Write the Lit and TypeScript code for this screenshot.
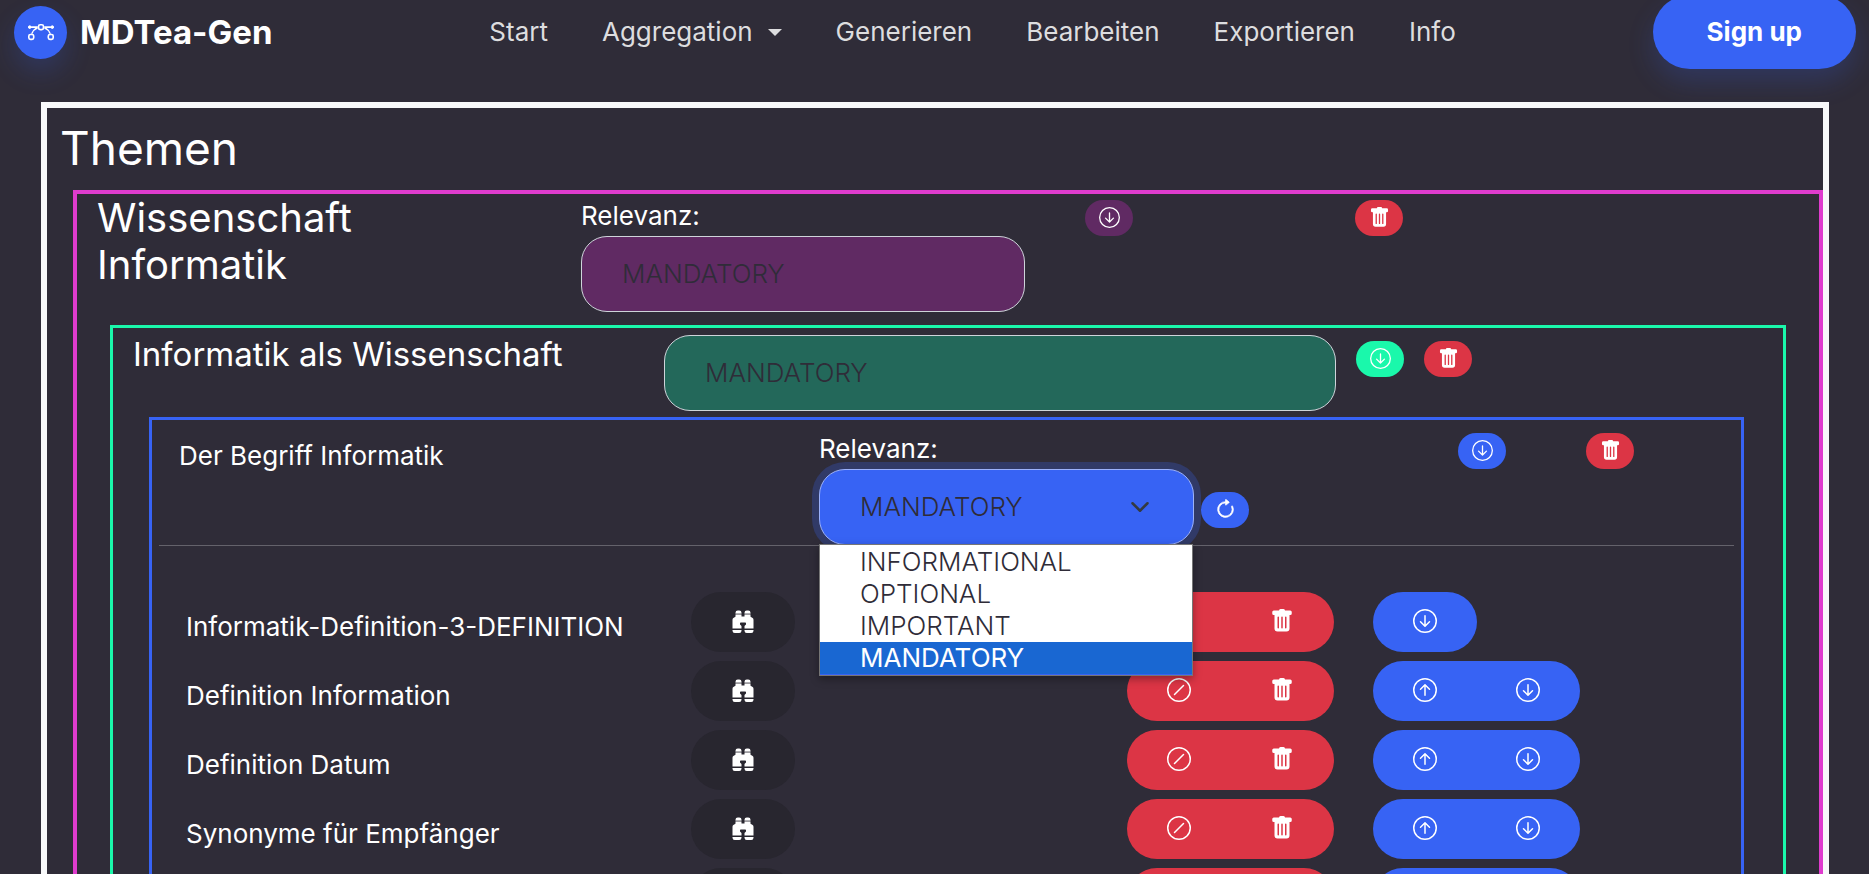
import { LitElement, html, css, svg } from "lit";
import { customElement } from "lit/decorators.js";
import { classMap } from "lit/directives/class-map.js";

const ICONS = {
  bezier: svg`<path fill-rule="evenodd" d="M0 10.5A1.500 1.500 0 0 1 1.500 9h1A1.500 1.500 0 0 1 4 10.500v1A1.500 1.500 0 0 1 2.500 13h-1A1.500 1.500 0 0 1 0 11.500v-1zm1.500-.5a.5.5 0 0 0-.5.5v1a.5.5 0 0 0 .5.5h1a.5.5 0 0 0 .5-.5v-1a.5.5 0 0 0-.5-.5h-1zm10.500.5A1.500 1.500 0 0 1 13.500 9h1a1.500 1.500 0 0 1 1.500 1.500v1a1.500 1.500 0 0 1-1.500 1.500h-1a1.500 1.500 0 0 1-1.500-1.500v-1zm1.500-.5a.5.5 0 0 0-.5.5v1a.5.5 0 0 0 .5.5h1a.5.5 0 0 0 .5-.5v-1a.5.5 0 0 0-.5-.5h-1zM6 4.500A1.500 1.500 0 0 1 7.500 3h1A1.500 1.500 0 0 1 10 4.500v1A1.500 1.500 0 0 1 8.500 7h-1A1.500 1.500 0 0 1 6 5.500v-1zM7.500 4a.5.5 0 0 0-.5.5v1a.5.5 0 0 0 .5.5h1a.5.5 0 0 0 .5-.5v-1a.5.5 0 0 0-.5-.5h-1z"/><path d="M6 4.500H1.866a1 1 0 1 0 0 1h2.668A6.517 6.517 0 0 0 1.814 9H2.500c.123 0 .244.015.358.043a5.517 5.517 0 0 1 3.185-3.185A1.503 1.503 0 0 1 6 5.500v-1zm3.957 1.358A1.500 1.500 0 0 0 10 5.500v-1h4.134a1 1 0 1 1 0 1h-2.668a6.517 6.517 0 0 1 2.720 3.500H13.500c-.123 0-.243.015-.358.043a5.517 5.517 0 0 0-3.185-3.185z"/>`,
  down: svg`<path fill-rule="evenodd" d="M1 8a7 7 0 1 0 14 0A7 7 0 0 0 1 8zm15 0A8 8 0 1 1 0 8a8 8 0 0 1 16 0zM8.500 4.500a.5.5 0 0 0-1 0v5.793L5.354 8.146a.5.5 0 1 0-.708.708l3 3a.5.5 0 0 0 .708 0l3-3a.5.5 0 0 0-.708-.708L8.500 10.293V4.500z"/>`,
  up: svg`<path fill-rule="evenodd" d="M1 8a7 7 0 1 0 14 0A7 7 0 0 0 1 8zm15 0A8 8 0 1 1 0 8a8 8 0 0 1 16 0zm-7.500 3.500a.5.5 0 0 1-1 0V5.707L5.354 7.854a.5.5 0 1 1-.708-.708l3-3a.5.5 0 0 1 .708 0l3 3a.5.5 0 0 1-.708.708L8.500 5.707V11.500z"/>`,
  slash: svg`<path d="M8 15A7 7 0 1 1 8 1a7 7 0 0 1 0 14zm0 1A8 8 0 1 0 8 0a8 8 0 0 0 0 16z"/><path d="M11.354 4.646a.5.5 0 0 0-.708 0l-6 6a.5.5 0 0 0 .708.708l6-6a.5.5 0 0 0 0-.708z"/>`,
  trash: svg`<path d="M2.500 1a1 1 0 0 0-1 1v1a1 1 0 0 0 1 1H3v9a2 2 0 0 0 2 2h6a2 2 0 0 0 2-2V4h.5a1 1 0 0 0 1-1V2a1 1 0 0 0-1-1H10a1 1 0 0 0-1-1H7a1 1 0 0 0-1 1H2.500zm3 4a.5.5 0 0 1 .5.5v7a.5.5 0 0 1-1 0v-7a.5.5 0 0 1 .5-.5zM8 5a.5.5 0 0 1 .5.5v7a.5.5 0 0 1-1 0v-7A.5.5 0 0 1 8 5zm3 .5v7a.5.5 0 0 1-1 0v-7a.5.5 0 0 1 1 0z"/>`,
  binoculars: svg`<path fill-opacity="0.55" d="M3 3h4v1H3zM9 3h4v1H9z"/><path d="M4.500 1A1.500 1.500 0 0 0 3 2.500V3h4v-.5A1.500 1.500 0 0 0 5.500 1h-1zM7 4v1h2V4h4v.882a.5.5 0 0 0 .276.447l.895.447A1.500 1.500 0 0 1 15 7.118V13H9v-1.500a.5.5 0 0 1 .146-.354l.854-.853V9.500a.5.5 0 0 0-.5-.5h-3a.5.5 0 0 0-.5.5v.793l.854.853A.5.5 0 0 1 7 11.500V13H1V7.118a1.500 1.500 0 0 1 .83-1.342l.894-.447A.5.5 0 0 0 3 4.882V4h4zM1 14v.5A1.500 1.500 0 0 0 2.500 16h3A1.500 1.500 0 0 0 7 14.500V14H1zm8 0v.5a1.500 1.500 0 0 0 1.500 1.500h3a1.500 1.500 0 0 0 1.500-1.500V14H9zm4-11H9v-.5A1.500 1.500 0 0 1 10.500 1h1A1.500 1.500 0 0 1 13 2.500V3z"/>`,
  refresh: svg`<g stroke="currentColor" stroke-width="0.5"><path fill-rule="evenodd" d="M8 3a5 5 0 1 0 4.546 2.914.5.5 0 0 1 .908-.417A6 6 0 1 1 8 2v1z"/><path d="M8 4.466V.534a.25.25 0 0 1 .41-.192l2.360 1.966c.12.1.12.284 0 .384L8.410 4.658A.25.250 0 0 1 8 4.466z"/></g>`,
};
type IconName = keyof typeof ICONS;

const LEVELS = ["INFORMATIONAL", "OPTIONAL", "IMPORTANT", "MANDATORY"];
const NAV = ["Start", "Aggregation", "Generieren", "Bearbeiten", "Exportieren", "Info"];
const ITEMS = [
  "Informatik-Definition-3-DEFINITION",
  "Definition Information",
  "Definition Datum",
  "Synonyme für Empfänger",
  "",
];

const icon = (name: IconName) =>
  html`<svg class="icon" viewBox="0 0 16 16" aria-hidden="true">${ICONS[name]}</svg>`;

const pill = (name: IconName, tone: string, label: string) =>
  html`<button type="button" class=${classMap({ pill: true, [tone]: true })} aria-label=${label}>${icon(name)}</button>`;

const relevance = (id: string, tone: string) =>
  html`<select id=${id} class=${classMap({ select: true, [tone]: true })} aria-label="Relevanz">
    ${LEVELS.map((l) => html`<option ?selected=${l === "MANDATORY"}>${l}</option>`)}
  </select>`;

@customElement("app-root")
export class AppRoot extends LitElement {
  static styles = css`
    :host {
      display: block;
      height: 100vh;
      overflow: hidden;
      background: #2f2c38;
      color: #fff;
      font: 400 26px/32px Inter, sans-serif;
    }
    * { box-sizing: border-box; }
    h1, h2, h3, h4, p, ul { margin: 0; padding: 0; font-weight: 400; }
    ul { list-style: none; }
    button { border: 0; color: inherit; font: inherit; cursor: pointer; }
    .icon { display: block; width: 24px; height: 24px; fill: currentColor; }

    .navbar {
      display: flex;
      align-items: center;
      justify-content: space-between;
      height: 64px;
      padding: 0 13px 0 14px;
    }
    .brand {
      display: flex;
      align-items: center;
      gap: 13px;
      padding-right: 20px;
      color: #fff;
      font-size: 33px;
      font-weight: 700;
      text-decoration: none;
    }
    .logo {
      display: grid;
      place-items: center;
      width: 53px;
      height: 53px;
      border-radius: 50%;
      background: #3763f4;
      box-shadow: 0 13px 27px rgba(55, 99, 244, 0.2);
    }
    .logo .icon { width: 26px; height: 26px; }
    .links { display: flex; gap: 54px; }
    .link {
      display: flex;
      align-items: center;
      gap: 15px;
      color: #dddddf;
      text-decoration: none;
    }
    .caret {
      border: 7px solid transparent;
      border-top-color: currentColor;
      border-bottom: 0;
    }
    .signup {
      height: 74px;
      padding: 0 54px;
      border-radius: 37px;
      background: #3763f4;
      box-shadow: 0 13px 27px rgba(55, 99, 244, 0.2);
      font-weight: 700;
    }

    .themes {
      margin: 38px 40px 0 41px;
      border: 6px solid #f8f9fa;
    }
    .themes-title { padding: 12px 13px 14px; font-size: 46px; line-height: 56px; }
    .topic { margin-left: 26px; border: 4px solid #df3cce; }
    .topic-head {
      display: grid;
      grid-template-columns: 484fr 504fr 270fr 464fr;
      align-items: start;
      padding: 0 0 13px 20px;
    }
    .topic-head .pill { margin-top: 6px; }
    .topic-head .field { padding: 6px 60px 0 0; }
    .topic-title { width: 300px; font-size: 40px; line-height: 47px; }
    .field { display: flex; flex-direction: column; gap: 4px; }
    .select {
      appearance: none;
      width: 100%;
      height: 76px;
      padding: 0 40px;
      border: 1px solid #ced4da;
      border-radius: 26px;
      color: #2f2c38;
      font: inherit;
      font-weight: 300;
    }
    .pill {
      display: grid;
      place-items: center;
      width: 48px;
      height: 36px;
      padding: 0 0 2px;
      border-radius: 18px;
    }
    .pill .icon { width: 21px; height: 21px; }
    .purple { background: #602a63; }
    .green { background: #23685a; }
    .mint { background: #1af8ab; }
    .blue { background: #3763f4; }
    .red { background: #dc3545; }
    .dark { background: #28262f; }

    .chapter { margin: 0 33px; border: 3px solid #1af8ab; }
    .chapter-head {
      display: grid;
      grid-template-columns: 531fr 1119fr;
      align-items: start;
      padding: 7px 0 6px 20px;
    }
    .chapter-title { font-size: 33px; line-height: 38px; }
    .chapter-tools {
      display: grid;
      grid-template-columns: 672fr 427fr;
      gap: 20px;
    }
    .pills { display: flex; gap: 20px; padding-top: 6px; }

    .section { margin: 0 39px 0 36px; padding: 0 7px; border: 3px solid #3763f4; }
    .section-head {
      display: grid;
      grid-template-columns: 640fr 639fr 128fr 148fr;
      align-items: start;
      padding: 13px 0 0 20px;
      border-bottom: 1px solid #64626b;
    }
    .section-title { padding-top: 7px; font-size: 26px; line-height: 32px; }
    .picker { display: flex; align-items: end; gap: 7px; }
    .picker .field { flex: 0 0 375px; }
    .picker .pill { margin-bottom: 17px; }
    .combo { position: relative; }
    .combo .select {
      display: block;
      outline: none;
      border-color: #9bb1fa;
      box-shadow: 0 0 0 7px rgba(55, 99, 244, 0.25);
    }
    .chevron {
      position: absolute;
      top: 28px;
      right: 44px;
      width: 20px;
      height: 20px;
      fill: none;
      stroke: #343a40;
      stroke-width: 2;
      stroke-linecap: round;
      stroke-linejoin: round;
      pointer-events: none;
    }
    .menu {
      position: absolute;
      z-index: 2;
      top: 75px;
      left: 0;
      right: 1px;
      padding-top: 1px;
      border: 1px solid #767676;
      background: #fff;
      box-shadow: 0 3px 8px rgba(0, 0, 0, 0.35);
      color: #2f2c38;
      font-weight: 300;
    }
    .option { padding: 0 40px; }
    .option.selected {
      border-bottom: 1px solid #3763f4;
      background: #1967d2;
      color: #fff;
      font-weight: 400;
    }

    .items { display: grid; gap: 9px; padding: 46px 0 0 27px; }
    .item {
      display: grid;
      grid-template-columns: 505fr 436fr 246fr 361fr;
      align-items: center;
    }
    .item-title { padding-top: 10px; }
    .group {
      display: flex;
      justify-self: start;
      overflow: hidden;
      border-radius: 30px;
    }
    .action {
      display: grid;
      place-items: center;
      width: 104px;
      height: 60px;
      padding: 0 0 2px;
    }
    .action + .action { margin-left: -1px; }
  `;

  render() {
    return html`
      <nav class="navbar">
        <a class="brand" href="#"><span class="logo">${icon("bezier")}</span>MDTea-Gen</a>
        <div class="links">
          ${NAV.map(
            (n) => html`<a class="link" href="#">${n}${n === "Aggregation" ? html`<span class="caret"></span>` : ""}</a>`
          )}
        </div>
        <button type="button" class="signup">Sign up</button>
      </nav>
      <main class="themes">
        <h1 class="themes-title">Themen</h1>
        <section class="topic">
          <div class="topic-head">
            <h2 class="topic-title">Wissenschaft Informatik</h2>
            <div class="field">
              <label for="topic-relevance">Relevanz:</label>
              ${relevance("topic-relevance", "purple")}
            </div>
            ${pill("down", "purple", "Nach unten")} ${pill("trash", "red", "Löschen")}
          </div>
          <section class="chapter">
            <div class="chapter-head">
              <h3 class="chapter-title">Informatik als Wissenschaft</h3>
              <div class="chapter-tools">
                ${relevance("chapter-relevance", "green")}
                <div class="pills">${pill("down", "mint", "Nach unten")} ${pill("trash", "red", "Löschen")}</div>
              </div>
            </div>
            <section class="section">
              <div class="section-head">
                <h4 class="section-title">Der Begriff Informatik</h4>
                <div class="picker">
                  <div class="field">
                    <label for="section-relevance">Relevanz:</label>
                    <div class="combo">
                      ${relevance("section-relevance", "blue")}
                      <svg class="chevron" viewBox="0 0 16 16" aria-hidden="true"><path d="M2 5l6 6 6-6" /></svg>
                      <ul class="menu" role="listbox" aria-label="Relevanz">
                        ${LEVELS.map(
                          (l) => html`<li
                            role="option"
                            aria-selected=${l === "MANDATORY"}
                            class=${classMap({ option: true, selected: l === "MANDATORY" })}
                          >${l}</li>`
                        )}
                      </ul>
                    </div>
                  </div>
                  ${pill("refresh", "blue", "Aktualisieren")}
                </div>
                ${pill("down", "blue", "Nach unten")} ${pill("trash", "red", "Löschen")}
              </div>
              <ul class="items">
                ${ITEMS.map(
                  (t, i) => html`<li class="item">
                    <p class="item-title">${t}</p>
                    <div class="group">${this.action("binoculars", "dark", "Ansehen")}</div>
                    <div class="group">
                      ${this.action("slash", "red", "Ausschließen")}${this.action("trash", "red", "Löschen")}
                    </div>
                    <div class="group">
                      ${i > 0 ? this.action("up", "blue", "Nach oben") : ""}${this.action("down", "blue", "Nach unten")}
                    </div>
                  </li>`
                )}
              </ul>
            </section>
          </section>
        </section>
      </main>
    `;
  }

  private action(name: IconName, tone: string, label: string) {
    return html`<button type="button" class=${classMap({ action: true, [tone]: true })} aria-label=${label}>
      ${icon(name)}
    </button>`;
  }
}
